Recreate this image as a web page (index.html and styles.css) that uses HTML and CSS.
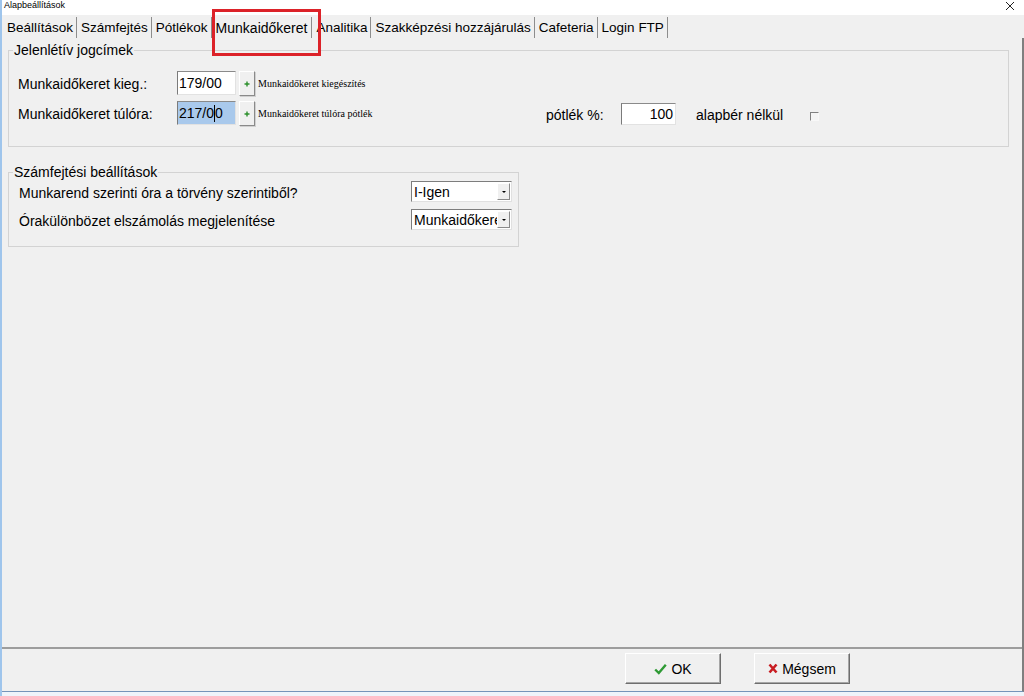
FILE: index.html
```html
<!DOCTYPE html>
<html lang="hu">
<head>
<meta charset="utf-8">
<title>Alapbeállítások</title>
<link rel="stylesheet" href="styles.css">
</head>
<body>
<div class="window">
  <header class="titlebar">
    <span class="title">Alapbeállítások</span>
    <svg class="close" width="10" height="10" viewBox="0 0 10 10"><path d="M1 1 L9 9 M9 1 L1 9" stroke="#222" stroke-width="1"/></svg>
  </header>
  <nav class="tabs">
    <span class="tab">Beállítások</span>
    <span class="tab">Számfejtés</span>
    <span class="tab">Pótlékok</span>
    <span class="tab tab-active">Munkaidőkeret</span>
    <span class="tab">Analitika</span>
    <span class="tab">Szakképzési hozzájárulás</span>
    <span class="tab">Cafeteria</span>
    <span class="tab">Login FTP</span>
  </nav>
  <div class="mark"></div>
  <div class="body">
    <main class="sheet">
      <fieldset class="group group-wide">
        <legend>Jelenlétív jogcímek</legend>
        <div class="rows rows-1">
          <div class="row">
            <span class="label">Munkaidőkeret kieg.:</span>
            <span class="input input-code">179/00</span>
            <span class="plus"><svg width="6" height="6" viewBox="0 0 6 6"><path d="M3 0.5 V5.5 M0.5 3 H5.5" stroke="#2b8f2b" stroke-width="1.4"/></svg></span>
            <span class="note">Munkaidőkeret kiegészítés</span>
          </div>
          <div class="row">
            <span class="label">Munkaidőkeret túlóra:</span>
            <span class="input input-code input-selected">217/0<span class="caret"></span>0</span>
            <span class="plus"><svg width="6" height="6" viewBox="0 0 6 6"><path d="M3 0.5 V5.5 M0.5 3 H5.5" stroke="#2b8f2b" stroke-width="1.4"/></svg></span>
            <span class="note">Munkaidőkeret túlóra pótlék</span>
            <span class="pct-label">pótlék %:</span>
            <span class="input input-pct">100</span>
            <span class="nobase">alapbér nélkül</span>
            <span class="checkbox"></span>
          </div>
        </div>
      </fieldset>
      <fieldset class="group group-narrow">
        <legend>Számfejtési beállítások</legend>
        <div class="rows rows-2">
          <div class="row row-sel">
            <span class="label label-long">Munkarend szerinti óra a törvény szerintiből?</span>
            <span class="select"><span class="select-text">I-Igen</span><span class="select-btn"><span class="arrow"></span></span></span>
          </div>
          <div class="row row-sel">
            <span class="label label-long">Órakülönbözet elszámolás megjelenítése</span>
            <span class="select"><span class="select-text">Munkaidőkere</span><span class="select-btn"><span class="arrow"></span></span></span>
          </div>
        </div>
      </fieldset>
    </main>
    <footer class="footer">
      <button class="btn" type="button"><svg width="13" height="12" viewBox="0 0 13 12"><path d="M1.2 6.5 L4.8 10 L11.8 1.8" fill="none" stroke="#2e9a34" stroke-width="2.4"/></svg><span>OK</span></button>
      <button class="btn" type="button"><svg width="10" height="11" viewBox="0 0 10 11"><path d="M1.5 1.5 L8.5 9.5 M8.5 1.5 L1.5 9.5" fill="none" stroke="#c81d22" stroke-width="2.6"/></svg><span>Mégsem</span></button>
    </footer>
  </div>
  <div class="bottom-strip"></div>
</div>
</body>
</html>
```

FILE: styles.css
```css
* { box-sizing: border-box; }
html, body { margin: 0; padding: 0; }
body {
  width: 1024px;
  height: 696px;
  overflow: hidden;
  background: #ffffff;
  font-family: "Liberation Sans", Arial, sans-serif;
  font-size: 14px;
  color: #000;
}
.window {
  position: relative;
  width: 1024px;
  height: 696px;
  display: flex;
  flex-direction: column;
  background: #f0f0f0;
  border-left: 2px solid #9fc5ec;
}
.titlebar {
  height: 15px;
  flex: none;
  background: #ffffff;
  display: flex;
  align-items: center;
  justify-content: space-between;
  padding: 0 9px 0 2px;
  font-size: 9px;
  line-height: 11px;
}
.title { margin-top: -4px; }
.close { margin-top: -4px; }

.tabs {
  height: 23px;
  flex: none;
  display: flex;
  align-items: flex-end;
  padding-left: 1px;
}
.tab {
  height: 21px;
  line-height: 22px;
  font-size: 13.5px;
  padding: 0 3px 0 4px;
  border-right: 1px solid #8d8d8d;
  white-space: nowrap;
}
.tab-active {
  font-size: 14px;
  padding: 0 4px 0 4px;
}
.mark {
  position: absolute;
  left: 210px;
  top: 9px;
  width: 109px;
  height: 47px;
  border: 3px solid #dc2229;
}

.body {
  flex: 1;
  display: flex;
  flex-direction: column;
  border-right: 2px solid #7f7f7f;
  border-bottom: 1px solid #7494ba;
}
.sheet {
  flex: 1;
  padding: 4px 0 0 6px;
  border-bottom: 2px solid #9d9d9d;
}
.group {
  margin: 0;
  padding: 0 4px;
  border: 1px solid #d3d3d3;
  min-width: 0;
}
.group legend {
  padding: 0 1px;
  font-size: 14px;
  line-height: 16px;
}
.group-wide { width: 1001px; }
.group-narrow { width: 511px; margin-top: 17px; }

.rows { display: flex; flex-direction: column; }
.rows-1 { padding: 13px 0 21px 5px; gap: 6px; }
.rows-2 { padding: 1px 0 16px 6px; gap: 7px; }
.row {
  height: 24px;
  display: flex;
  align-items: center;
}
.row-sel { height: 21px; }
.label { width: 159px; white-space: nowrap; margin-top: 1px; }
.label-long { width: 392px; margin-top: 2px; }

.input {
  height: 24px;
  background: #ffffff;
  border: 1px solid;
  border-color: #8a8a8a #e2e2e2 #e2e2e2 #7a7a7a;
  line-height: 22px;
  white-space: nowrap;
}
.input-code { width: 59px; padding-left: 1px; }
.input-selected { background: #a9c9ec; }
.caret {
  display: inline-block;
  width: 1px;
  height: 17px;
  background: #000;
  vertical-align: -4px;
}
.plus {
  width: 16px;
  height: 25px;
  margin-left: 3px;
  align-self: flex-start;
  display: flex;
  align-items: center;
  justify-content: center;
  background: #f0f0f0;
  border: 1px solid;
  border-color: #ffffff #8a8a8a #8a8a8a #ffffff;
  box-shadow: 1px 1px 0 #d0d0d0;
}
.note {
  width: 291px;
  padding-left: 3px;
  font-family: "Liberation Serif", "Times New Roman", serif;
  font-size: 10px;
  white-space: nowrap;
}
.pct-label { width: 75px; margin-top: 4px; }
.input-pct {
  width: 55px;
  height: 22px;
  line-height: 20px;
  text-align: right;
  padding-right: 2px;
  margin-top: 2px;
}
.nobase { width: 114px; margin-left: 20px; margin-top: 4px; }
.checkbox {
  width: 9px;
  height: 9px;
  margin-top: 7px;
  background: #f4f4f4;
  border: 1px solid;
  border-color: #808080 #f8f8f8 #f8f8f8 #808080;
}

.select {
  width: 101px;
  height: 21px;
  display: flex;
  background: #ffffff;
  border: 1px solid;
  border-color: #7d7d7d #e0e0e0 #e0e0e0 #7d7d7d;
}
.select-text {
  flex: 1;
  min-width: 0;
  overflow: hidden;
  white-space: nowrap;
  padding-left: 2px;
  line-height: 20px;
}
.select-btn {
  width: 13px;
  flex: none;
  margin: 1px 1px 1px 0;
  display: flex;
  align-items: center;
  justify-content: center;
  background: #f0f0f0;
  border: 1px solid;
  border-color: #ffffff #8a8a8a #8a8a8a #ffffff;
}
.arrow {
  width: 0;
  height: 0;
  border-left: 2px solid transparent;
  border-right: 2px solid transparent;
  border-top: 2px solid #000;
}

.footer {
  height: 42px;
  flex: none;
  display: flex;
  align-items: flex-start;
  gap: 33px;
  padding: 4px 0 0 623px;
}
.btn {
  width: 96px;
  height: 31px;
  display: flex;
  align-items: center;
  justify-content: center;
  gap: 4px;
  font-family: "Liberation Sans", Arial, sans-serif;
  font-size: 14px;
  color: #000;
  background: #f0f0f0;
  border: 1px solid;
  border-color: #ffffff #6e6e6e #6e6e6e #ffffff;
  box-shadow: inset -1px -1px 0 #a6a6a6;
  padding: 0;
}
.bottom-strip {
  height: 4px;
  flex: none;
  background: #eef4fb;
}
```
